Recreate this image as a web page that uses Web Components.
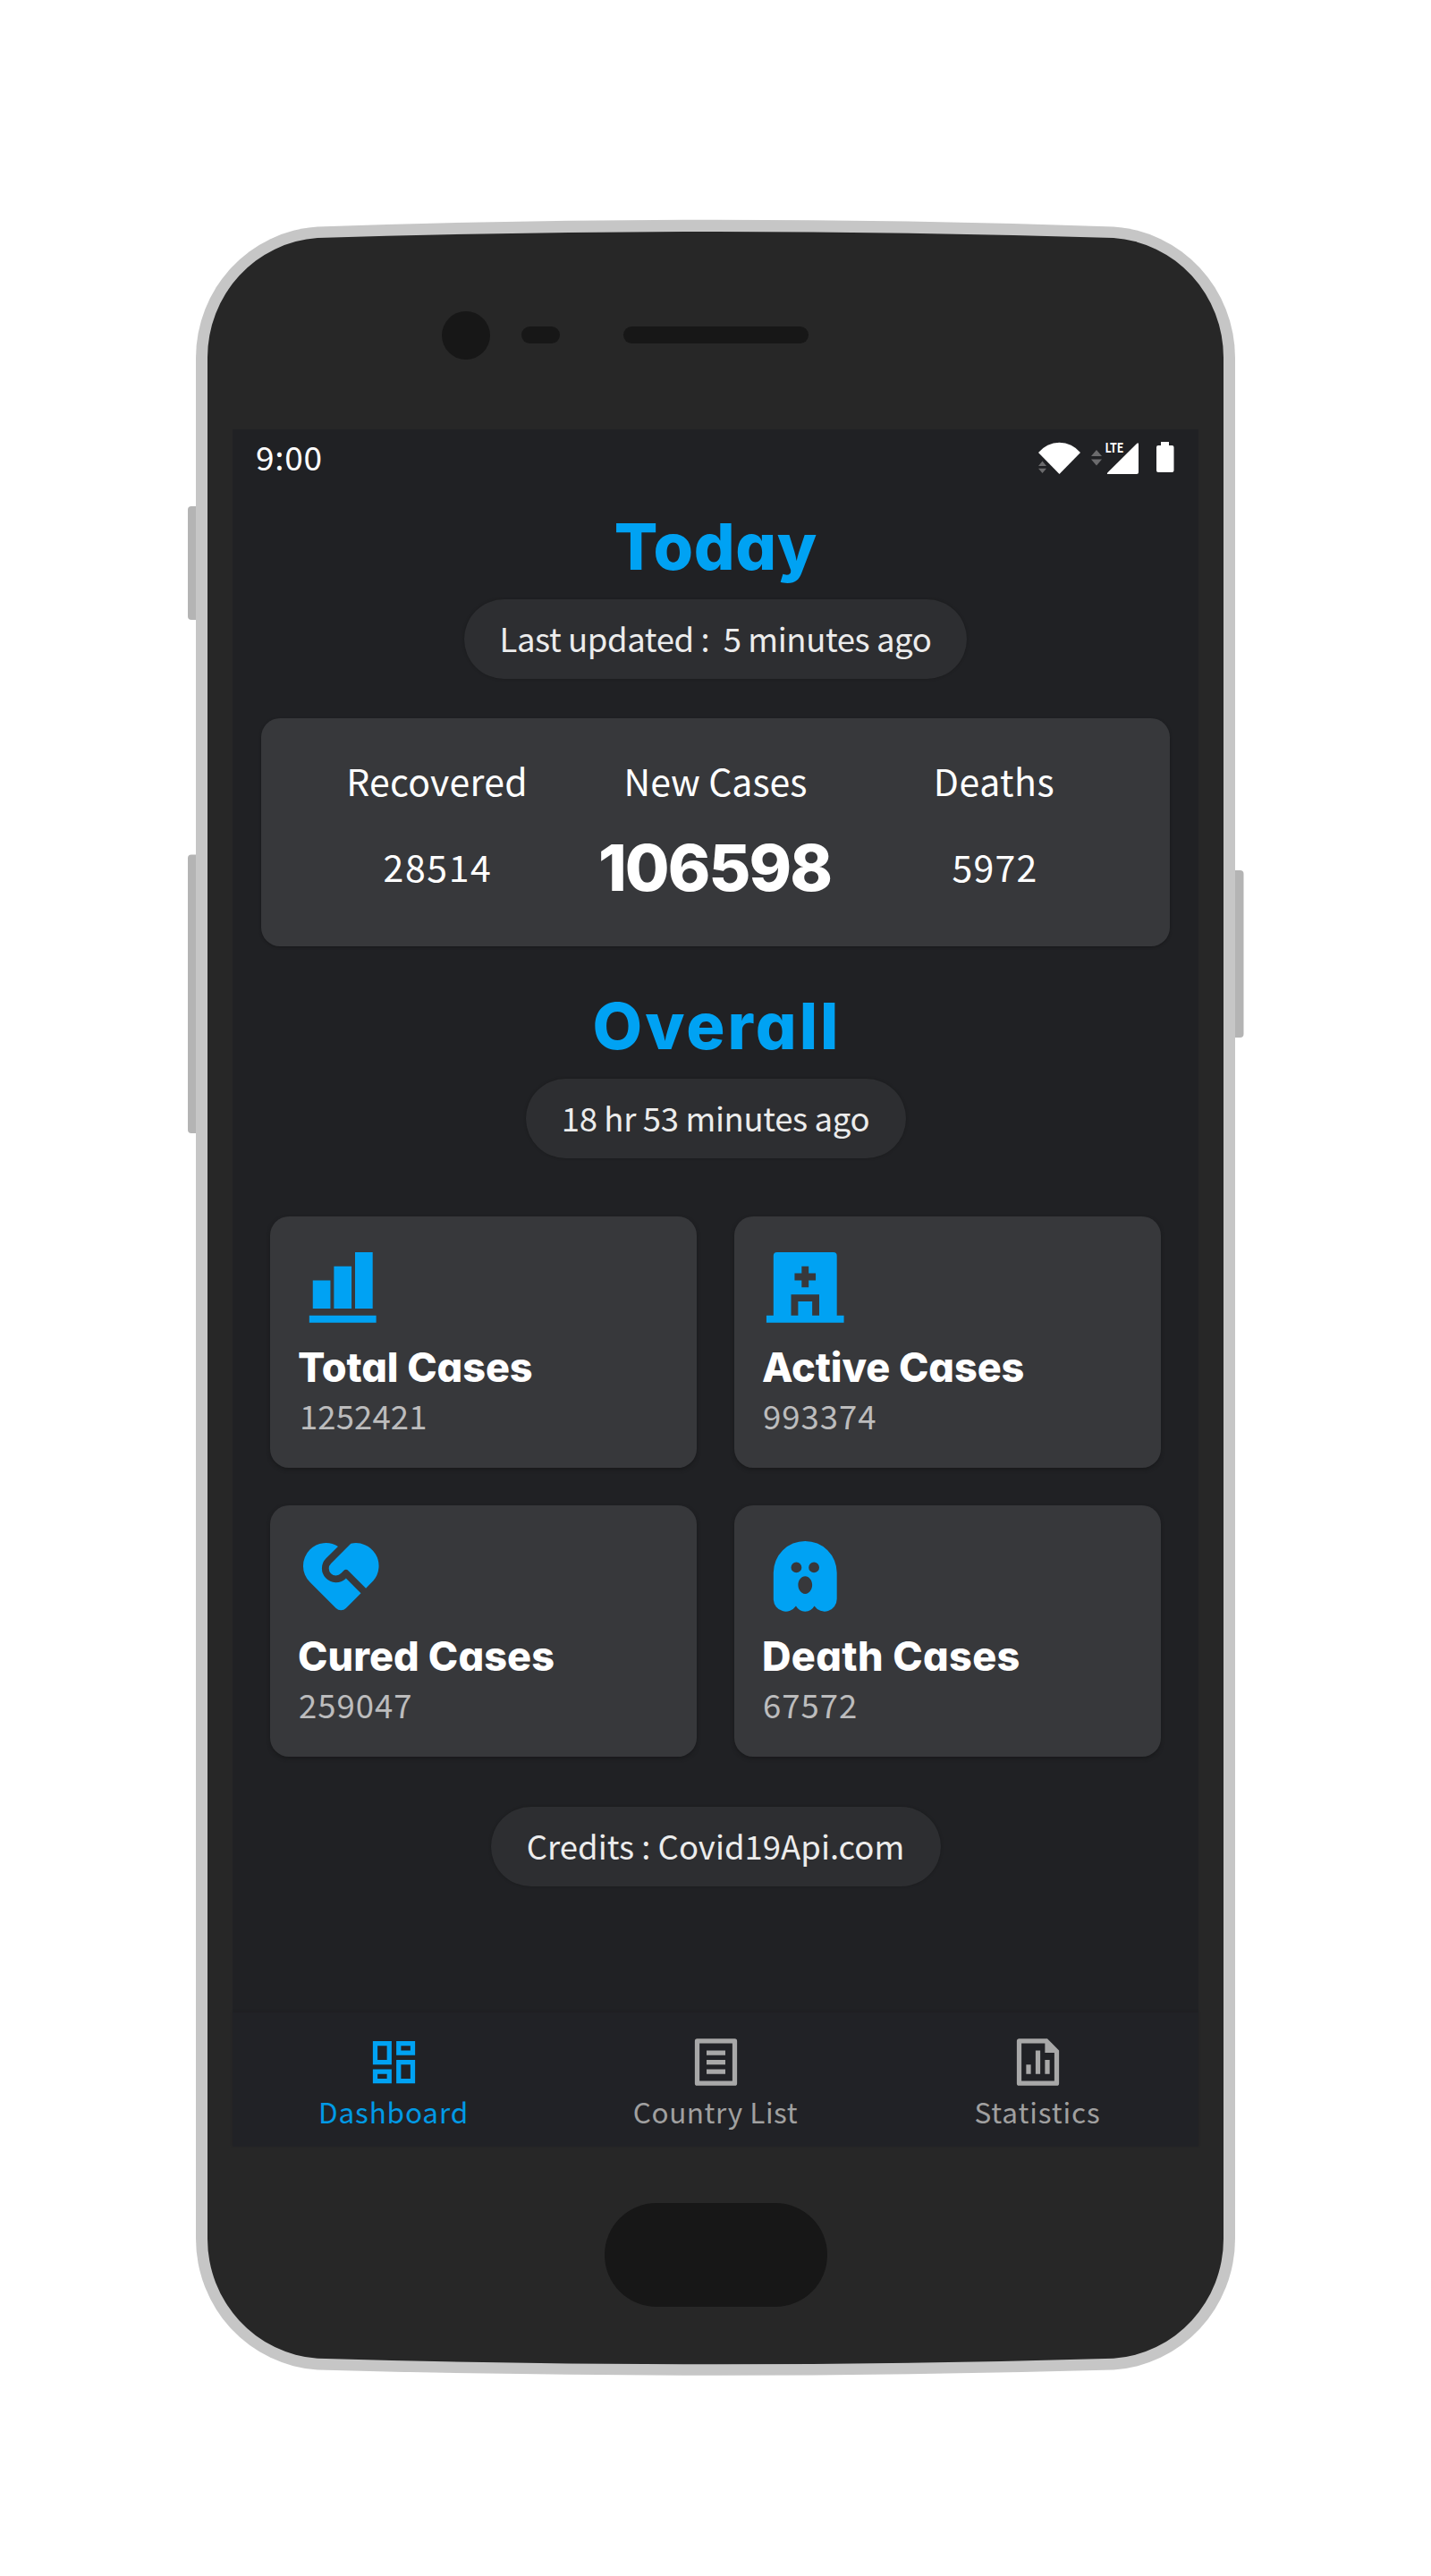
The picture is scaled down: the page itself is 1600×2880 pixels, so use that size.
<!DOCTYPE html>
<html lang="en">
<head>
<meta charset="utf-8">
<title>Covid-19 Dashboard</title>
<style>
  body { margin: 0; background: #fff; width: 1600px; height: 2880px; overflow: hidden; }
</style>
</head>
<body>
<phone-frame>
  <app-screen>
    <status-bar slot="status">9:00</status-bar>
    <section-title style="--ls:.6px">Today</section-title>
    <info-pill style="--w:562px;--ls:-.41px">Last updated :&nbsp; 5 minutes ago</info-pill>
    <today-card>
      <stat-cell label="Recovered" value="28514" style="--lls:.25px;--ls:1.6px"></stat-cell>
      <stat-cell label="New Cases" value="106598" strong style="--ls:-1.9px"></stat-cell>
      <stat-cell label="Deaths" value="5972" style="--lls:.5px;--ls:1.3px"></stat-cell>
    </today-card>
    <section-title style="--mt:49px;--ls:3px">Overall</section-title>
    <info-pill style="--w:425px;--ls:-.35px">18 hr 53 minutes ago</info-pill>
    <case-grid>
      <case-card icon="bars" label="Total Cases" value="1252421" style="--tls:-.1px;--ls:.1px;--indent:1px"></case-card>
      <case-card icon="hospital" label="Active Cases" value="993374" style="--tls:-.1px;--ls:1px"></case-card>
      <case-card icon="heart" label="Cured Cases" value="259047" style="--tls:.1px;--ls:1px"></case-card>
      <case-card icon="ghost" label="Death Cases" value="67572" style="--tls:.35px;--ls:1px"></case-card>
    </case-grid>
    <info-pill style="--w:503px;--mt:56px;--ls:0">Credits : Covid19Api.com</info-pill>
    <bottom-nav slot="nav">
      <nav-item icon="dashboard" active style="--ls:.85px">Dashboard</nav-item>
      <nav-item icon="list" style="--ls:.55px">Country List</nav-item>
      <nav-item icon="chart" style="--ls:.9px">Statistics</nav-item>
    </bottom-nav>
  </app-screen>
</phone-frame>

<script>
const BODY = `"Noto Sans CJK SC", "Noto Sans", sans-serif`;
const HEAD = `Inter, "Open Sans", sans-serif`;

const ICONS = {
  bars: 'M4 10h5v8H4zM10 6h5v12h-5zM16 2h5v16h-5zM3 20h19v2H3z',
  hospital: 'M21 20h2v2H1v-2h2V3a1 1 0 0 1 1-1h16a1 1 0 0 1 1 1v17zM11 8H9v2h2v2h2v-2h2V8h-2V6h-2v2zm3 12h2v-6H8v6h2v-4h4v4z',
  heart: 'M14.121 10.48a1 1 0 0 0-1.414 0l-.707.706a2 2 0 1 1-2.828-2.828l5.63-5.632a6.5 6.5 0 0 1 6.377 10.568l-2.108 2.135-4.95-4.95zM3.161 4.468a6.503 6.503 0 0 1 8.009-.938L7.757 6.944a4 4 0 0 0 5.513 5.794l.144-.137 4.243 4.242-4.243 4.243a2 2 0 0 1-2.828 0L3.16 13.66a6.5 6.5 0 0 1 0-9.192z',
  ghost: 'M12 2a9 9 0 0 1 9 9v7.5a3.5 3.5 0 0 1-6.39 1.976 2.999 2.999 0 0 1-5.223 0 3.5 3.5 0 0 1-6.382-1.783L3 18.499V11a9 9 0 0 1 9-9zm0 10c-1.105 0-2 1.12-2 2.5s.895 2.5 2 2.5 2-1.12 2-2.5-.895-2.5-2-2.5zM9.5 8a1.5 1.5 0 1 0 0 3 1.5 1.5 0 0 0 0-3zm5 0a1.5 1.5 0 1 0 0 3 1.5 1.5 0 0 0 0-3z',
  dashboard: 'M13 21V11h8v10h-8zM3 13V3h8v10H3zm6-2V5H5v6h4zM3 21v-6h8v6H3zm2-2h4v-2H5v2zm10 0h4v-6h-4v6zM13 3h8v6h-8V3zm2 2v2h4V5h-4z',
  list: 'M20 22H4a1 1 0 0 1-1-1V3a1 1 0 0 1 1-1h16a1 1 0 0 1 1 1v18a1 1 0 0 1-1 1zm-1-2V4H5v16h14zM8 7h8v2H8V7zm0 4h8v2H8v-2zm0 4h8v2H8v-2z',
  chart: 'M11 7h2v10h-2V7zm4 4h2v6h-2v-6zm-8 2h2v4H7v-4zm8-9H5v16h14V8h-4V4zM3 2.992C3 2.444 3.447 2 3.999 2H16l5 5v13.993A1 1 0 0 1 20.007 22H3.993A1 1 0 0 1 3 21.008V2.992z'
};
const icon = name => `<svg viewBox="0 0 24 24" fill="currentColor" fill-rule="evenodd"><path d="${ICONS[name]}"/></svg>`;

function define(name, render) {
  customElements.define(name, class extends HTMLElement {
    connectedCallback() {
      if (!this.shadowRoot) this.attachShadow({ mode: 'open' }).innerHTML = render(this);
    }
  });
}

define('phone-frame', () => `
  <style>
    :host { display: grid; width: 1600px; height: 2880px; }
    svg, .screen { grid-area: 1 / 1; }
    .screen { margin: 480px 260px; width: 1080px; height: 1920px; }
  </style>
  <svg width="1600" height="2880" viewBox="0 0 1600 2880">
    <g fill="#b4b4b4">
      <rect x="210" y="566" width="20" height="127" rx="4"/>
      <rect x="210" y="955.500" width="20" height="311.500" rx="4"/>
      <rect x="1370" y="973" width="20.5" height="187" rx="4"/>
    </g>
    <path fill="#c6c6c6" d="M219 400A145 147 0 0 1 355 253.5Q800 238 1245 253.5A145 147 0 0 1 1381 400V2503A145 147 0 0 1 1245 2649.5Q800 2662 355 2649.5A145 147 0 0 1 219 2503Z"/>
    <path fill="#272727" d="M232 400A132 134 0 0 1 355 266Q800 252 1245 266A132 134 0 0 1 1368 400V2503A132 134 0 0 1 1245 2636.7Q800 2650 355 2636.7A132 134 0 0 1 232 2503Z"/>
    <g fill="#171717">
      <circle cx="521" cy="375" r="27"/>
      <rect x="583" y="365" width="43" height="19" rx="9.5"/>
      <rect x="697" y="365" width="207" height="19" rx="9.5"/>
      <rect x="676" y="2463" width="249" height="116" rx="58"/>
    </g>
  </svg>
  <div class="screen"><slot></slot></div>`);

define('app-screen', () => `
  <style>
    :host { display: flex; flex-direction: column; height: 1920px; background: #202124; color: #fff; font-family: ${BODY}; }
    main { flex: 1; display: flex; flex-direction: column; align-items: center; padding-top: 28px; }
  </style>
  <slot name="status"></slot>
  <main><slot></slot></main>
  <slot name="nav"></slot>`);

define('status-bar', () => `
  <style>
    :host { display: flex; justify-content: space-between; align-items: flex-start; height: 63px; }
    .time { padding-left: 26px; font-size: 37px; line-height: 61px; letter-spacing: .7px; }
    svg { display: block; }
    text { font: 700 15px ${BODY}; }
  </style>
  <span class="time"><slot></slot></span>
  <svg width="190" height="63" viewBox="1150 480 190 63" fill="#fff">
    <path d="M1161 506A30 30 0 0 1 1208 506L1184.5 530Z"/>
    <g fill="#6b6b6d"><path d="M1165.5 515.5l4.5 5.5h-9zM1165.5 529l4.500-5.300h-9zM1226 503l6 7h-12zM1226 520.500l6-7h-12z"/></g>
    <path d="M1271 496q2-2 2 .7V528q0 2-2 2H1239q-2 0-.5-1.700z"/>
    <path d="M1298 494h9v4h3.500q2 0 2 2v26q0 2-2 2h-15.500q-2 0-2-2v-26q0-2 2-2h3z"/>
    <text x="1235.500" y="506" textLength="21" lengthAdjust="spacingAndGlyphs">LTE</text>
  </svg>`);

define('section-title', () => `
  <style>
    :host { display: block; margin-top: var(--mt, 0); padding-left: var(--ls); color: #00a2f3; font: 800 72px/80px ${HEAD};
      font-feature-settings: "cv11"; letter-spacing: var(--ls); }
  </style><slot></slot>`);

define('info-pill', () => `
  <style>
    :host { display: block; box-sizing: border-box; margin-top: var(--mt, 19px); width: var(--w); height: 89px; border-radius: 45px;
      background: #2d2e31; box-shadow: 0 0 2px 1px #1d1e20; color: #ececec; font-size: 36.5px; line-height: 88px;
      text-align: center; white-space: nowrap; letter-spacing: var(--ls); }
  </style><slot></slot>`);

define('today-card', () => `
  <style>
    :host { display: grid; grid-template-columns: repeat(3, 311.5px); justify-content: center; box-sizing: border-box;
      width: 1016px; height: 255px; margin-top: 44px; padding-top: 42px; border-radius: 21px; background: #37383b;
      box-shadow: 0 1px 3px #18191b; }
  </style><slot></slot>`);

define('stat-cell', el => `
  <style>
    :host { display: flex; flex-direction: column; align-items: center; gap: 29px; }
    .label { font-size: 41px; line-height: 54px; letter-spacing: var(--lls, 0); white-space: nowrap; }
    .value { padding-left: 2px; font-size: 41px; line-height: 80px; height: 84px; letter-spacing: var(--ls); }
    :host([strong]) .value { padding: 0 2px 0 0; font: 800 72px/84px ${HEAD}; }
  </style>
  <span class="label">${el.getAttribute('label')}</span>
  <span class="value">${el.getAttribute('value')}</span>`);

define('case-grid', () => `
  <style>
    :host { display: grid; grid-template-columns: 477px 477px; grid-auto-rows: 281px; gap: 42px; margin-top: 65px; }
  </style><slot></slot>`);

define('case-card', el => `
  <style>
    :host { display: flex; flex-direction: column; align-items: flex-start; box-sizing: border-box; padding: 32px;
      border-radius: 21px; background: #37383b; box-shadow: 0 2px 4px #18191b; }
    svg { width: 94.5px; height: 94.5px; color: #00a2f3; display: block; }
    .title { margin: 15px 0 3px -1px; font: 800 45px/54px ${HEAD}; font-feature-settings: "cv11"; letter-spacing: var(--tls); white-space: nowrap; }
    .value { margin-left: var(--indent, 0); font-size: 36.5px; line-height: 48px; color: #bcbcbd; letter-spacing: var(--ls); }
  </style>
  ${icon(el.getAttribute('icon'))}
  <span class="title">${el.getAttribute('label')}</span>
  <span class="value">${el.getAttribute('value')}</span>`);

define('bottom-nav', () => `
  <style>
    :host { display: grid; grid-template-columns: repeat(3, 1fr); height: 150px; background: #212226; box-shadow: 0 -1px 2px #1f2023; }
  </style><slot></slot>`);

define('nav-item', el => `
  <style>
    :host { display: flex; flex-direction: column; align-items: center; padding-top: 24px; color: #a8a8a8; }
    :host([active]) { color: #00a2f3; }
    svg { width: 63px; height: 63px; display: block; }
    .label { margin-top: 3px; font-size: 31.5px; line-height: 40px; letter-spacing: var(--ls); white-space: nowrap; opacity: .94; }
  </style>
  ${icon(el.getAttribute('icon'))}
  <span class="label"><slot></slot></span>`);
</script>
</body>
</html>
